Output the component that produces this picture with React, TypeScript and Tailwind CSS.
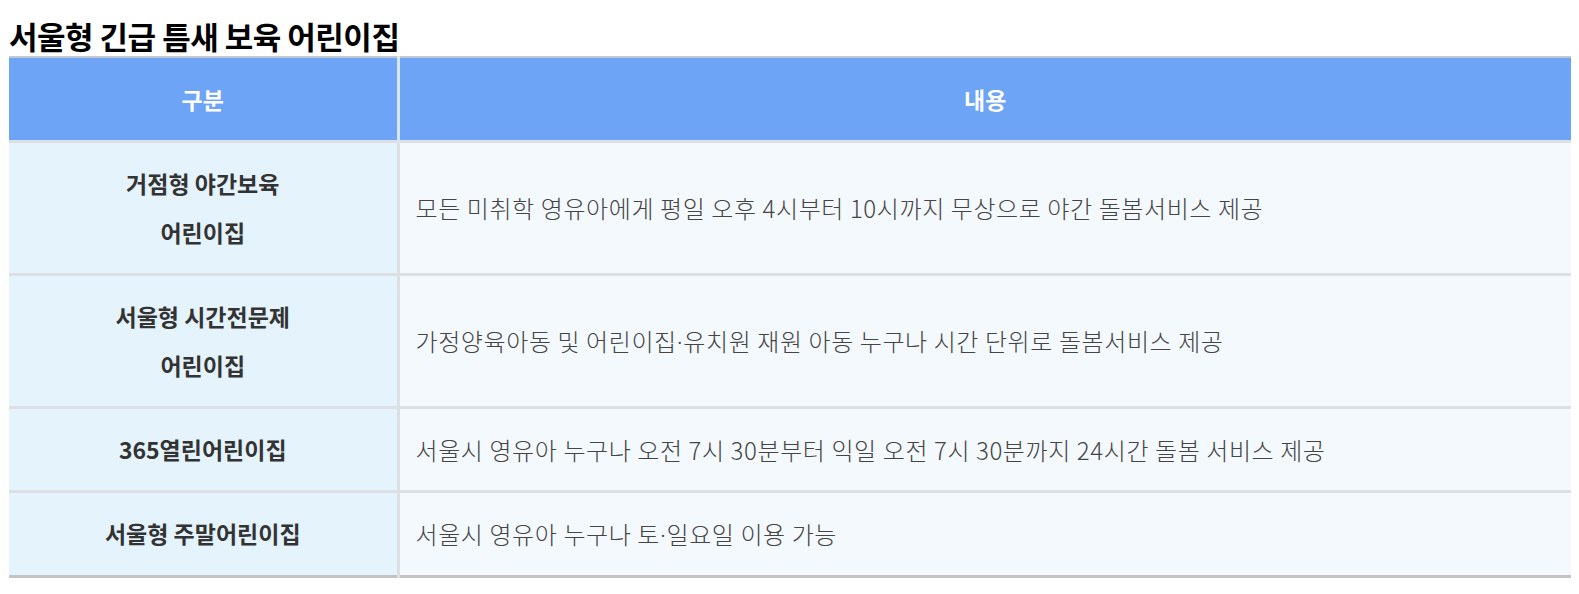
const rows: { name: string[]; desc: string[] }[] = [
  {
    name: ['거점형 야간보육', '어린이집'],
    desc: ['모든 미취학 영유아에게 평일 오후 4시부터 10시까지 무상으로 야간 돌봄서비스 제공'],
  },
  {
    name: ['서울형 시간전문제', '어린이집'],
    desc: ['가정양육아동 및 어린이집', '유치원 재원 아동 누구나 시간 단위로 돌봄서비스 제공'],
  },
  {
    name: ['365열린어린이집'],
    desc: ['서울시 영유아 누구나 오전 7시 30분부터 익일 오전 7시 30분까지 24시간 돌봄 서비스 제공'],
  },
  {
    name: ['서울형 주말어린이집'],
    desc: ['서울시 영유아 누구나 토', '일요일 이용 가능'],
  },
];

export default function App() {
  return (
    <div className="min-h-[594px] bg-white px-[9px] pt-[16px] font-['Noto_Sans_CJK_KR','Noto_Sans',sans-serif]">
      <h2 className="text-[31px] font-bold leading-[40px] text-black tracking-[-0.5px]">
        서울형 긴급 틈새 보육 어린이집
      </h2>
      <table className="w-[1562px] border-collapse border-t-2 border-t-[#c3c8d0] border-b-[3px] border-b-[#c4c4c4]">
        <thead>
          <tr className="bg-[#6ea4f5] text-white">
            <th className="w-[389px] h-[84px] border-r-[3px] border-r-[#d9e4f4] text-[23px] font-bold">
              구분
            </th>
            <th className="h-[84px] text-[23px] font-bold">내용</th>
          </tr>
        </thead>
        <tbody>
          {rows.map((r, i) => (
            <tr key={i} className="border-t-[3px] border-t-[#dcdfe3]">
              <td className="bg-[#e4f3fc] border-r-[3px] border-r-[#dcdfe3] py-[16px] text-center text-[23px] leading-[49px] font-bold text-[#333]">
                {r.name.map((n, j) => (
                  <div key={j}>{n}</div>
                ))}
              </td>
              <td className="bg-[#f4f9fd] py-[16px] pl-[16px] text-[24px] leading-[49px] font-light tracking-[0.6px] text-[#444]">
                {r.desc.map((d, j) => (
                  <span key={j}>
                    {j > 0 && <span className="font-['Noto_Sans',sans-serif]">·</span>}
                    {d}
                  </span>
                ))}
              </td>
            </tr>
          ))}
        </tbody>
      </table>
    </div>
  );
}
